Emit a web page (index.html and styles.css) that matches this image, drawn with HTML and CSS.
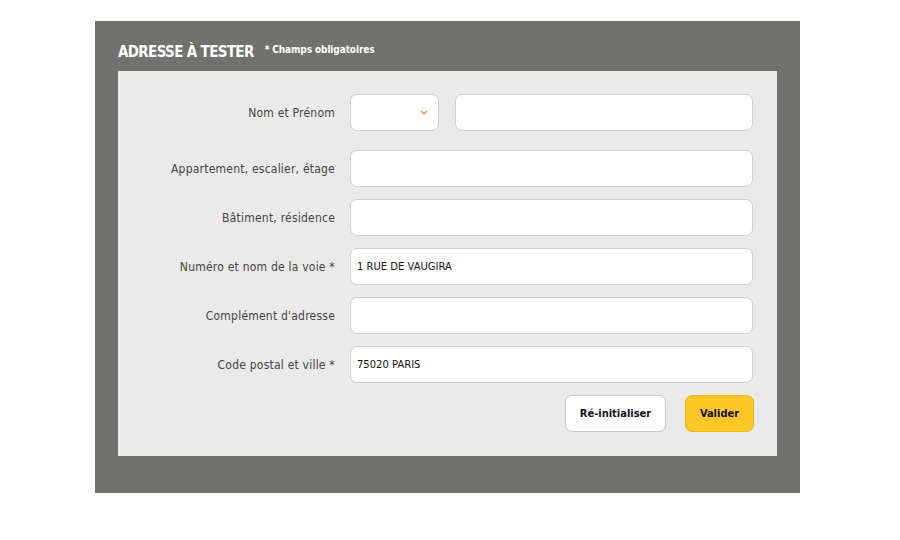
FILE: index.html
```html
<!DOCTYPE html>
<html lang="fr">
<head>
<meta charset="utf-8">
<link rel="stylesheet" href="styles.css">
</head>
<body>
<div class="box">
  <div class="head">
    <h1 class="title">ADRESSE À TESTER</h1>
    <span class="req">* Champs obligatoires</span>
  </div>
  <div class="panel">
    <div class="row first">
      <label class="lbl">Nom et Prénom</label>
      <div class="pair">
        <div class="field select">
          <svg class="chev" width="8" height="5" viewBox="0 0 8 5"><path d="M1 1 L4 4 L7 1" fill="none" stroke="#c48a3a" stroke-width="1.2"/></svg>
        </div>
        <div class="field grow"></div>
      </div>
    </div>
    <div class="row">
      <label class="lbl">Appartement, escalier, étage</label>
      <div class="field"></div>
    </div>
    <div class="row">
      <label class="lbl">Bâtiment, résidence</label>
      <div class="field"></div>
    </div>
    <div class="row">
      <label class="lbl">Numéro et nom de la voie *</label>
      <div class="field">1 RUE DE VAUGIRA</div>
    </div>
    <div class="row">
      <label class="lbl">Complément d'adresse</label>
      <div class="field"></div>
    </div>
    <div class="row">
      <label class="lbl">Code postal et ville *</label>
      <div class="field">75020 PARIS</div>
    </div>
    <div class="actions">
      <button class="btn reset">Ré-initialiser</button>
      <button class="btn ok">Valider</button>
    </div>
  </div>
</div>
</body>
</html>
```
FILE: styles.css
```css
html, body { margin: 0; padding: 0; background: #fff; }
body { font-family: "DejaVu Sans", Verdana, sans-serif; }
.box {
  margin: 21px 0 0 95px;
  width: 705px;
  height: 472px;
  background: #71716f;
  box-sizing: border-box;
  padding: 0 23px;
}
.head {
  height: 50px;
  display: flex;
  align-items: flex-end;
  padding-bottom: 10px;
  box-sizing: border-box;
}
.title {
  margin: 0;
  font-family: "DejaVu Sans Condensed", "DejaVu Sans", sans-serif;
  font-weight: bold;
  font-size: 15px;
  letter-spacing: -0.65px;
  color: #fff;
  line-height: 18px;
}
.req {
  margin-left: 11px;
  align-self: flex-start;
  margin-top: 23px;
  font-family: "DejaVu Sans Condensed", sans-serif;
  font-size: 10px;
  font-weight: bold;
  letter-spacing: -0.1px;
  color: #fff;
}
.panel {
  width: 659px;
  height: 385px;
  background: #eaeaea;
  box-sizing: border-box;
  padding: 23px 24px 0 0;
}
.row {
  display: flex;
  align-items: center;
  margin-bottom: 12px;
}
.row.first { margin-bottom: 19px; }
.lbl {
  width: 217px;
  text-align: right;
  font-family: "DejaVu Sans Condensed", sans-serif;
  font-size: 12px;
  letter-spacing: 0.22px;
  color: #444;
  padding-right: 15px;
  box-sizing: content-box;
  flex: none;
}
.field {
  flex: 1;
  height: 37px;
  box-sizing: border-box;
  background: #fff;
  border: 1px solid #cfcfcf;
  border-radius: 7px;
  display: flex;
  align-items: center;
  padding-left: 6px;
  font-family: "DejaVu Sans", sans-serif;
  font-size: 10px;
  color: #111;
}
.pair { flex: 1; display: flex; gap: 16px; }
.select { flex: none; width: 89px; justify-content: flex-end; padding-right: 10px; }
.grow { flex: 1; }
.actions {
  display: flex;
  justify-content: flex-end;
  gap: 19px;
  margin-top: 0;
}
.btn {
  height: 37px;
  border-radius: 7px;
  font-family: "DejaVu Sans Condensed", sans-serif;
  font-weight: bold;
  font-size: 11px;
  color: #111;
  cursor: pointer;
}
.reset { width: 101px; background: #fff; border: 1px solid #c9c9c9; }
.ok { width: 69px; background: #ffc627; border: 1px solid #f0b820; margin-right: -1px; }
```
